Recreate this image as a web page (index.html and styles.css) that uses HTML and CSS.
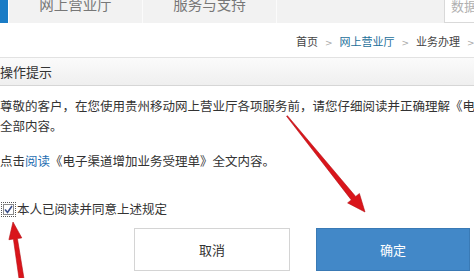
FILE: index.html
```html
<!DOCTYPE html>
<html lang="zh-CN">
<head>
<meta charset="utf-8">
<title>操作提示</title>
<link rel="stylesheet" href="styles.css">
</head>
<body>
<div class="page">
  <div class="nav">
    <div class="nav-accent"></div>
    <div class="nav-tab">网上营业厅</div>
    <div class="nav-tab">服务与支持</div>
    <div class="nav-fill"></div>
    <div class="search">数据</div>
  </div>
  <div class="crumbs">
    <span class="crumb">首页</span><span class="sep">&gt;</span><span class="crumb link">网上营业厅</span><span class="sep">&gt;</span><span class="crumb">业务办理</span><span class="sep">&gt;</span>
  </div>
  <div class="panel-head">操作提示</div>
  <div class="panel-body">
    <p class="intro">尊敬的客户，在您使用贵州移动网上营业厅各项服务前，请您仔细阅读并正确理解《电子渠道增加业务受理单》的<br>全部内容。</p>
    <p class="read">点击<span class="link">阅读</span>《电子渠道增加业务受理单》全文内容。</p>
    <div class="agree">
      <span class="check"><svg width="9" height="9" viewBox="0 0 9 9"><path d="M1 4.5 L3.5 7.5 L8 1" fill="none" stroke="#3a4f8a" stroke-width="1.6"/></svg></span>
      <span>本人已阅读并同意上述规定</span>
    </div>
    <div class="actions">
      <button class="btn btn-cancel">取消</button>
      <button class="btn btn-ok">确定</button>
    </div>
  </div>
  <svg class="arrows" width="474" height="278" viewBox="0 0 474 278">
    <polygon points="286.6,116.3 351.3,199.9 347.6,202.9 365,212 359.4,193.5 355.7,196.5 287.4,115.7" fill="#d9151b" stroke="#b50d12" stroke-width="0.6"/>
    <polygon points="13,222 8.9,239.7 13.4,239.1 20,285.4 25,284.6 17.4,238.5 21.8,237.9" fill="#d9151b" stroke="#b50d12" stroke-width="0.6"/>
  </svg>
</div>
</body>
</html>
```
FILE: styles.css
```css
html, body {
  margin: 0;
  padding: 0;
  background: #fff;
  overflow: hidden;
}
.page {
  position: relative;
  width: 474px;
  height: 278px;
  overflow: hidden;
  font-family: "Noto Sans CJK SC", "Noto Sans", sans-serif;
  font-size: 12.5px;
  color: #333;
}
.nav {
  display: flex;
  height: 23px;
}
.nav-accent {
  width: 8px;
  background: #1a7cc6;
  margin-right: 1px;
}
.nav-tab {
  width: 134px;
  background: #f2f2f2;
  border-right: 1px solid #fbfbfb;
  color: #777;
  font-size: 14.5px;
  line-height: 15px;
  display: flex;
  align-items: flex-end;
  justify-content: center;
  padding-bottom: 12px;
  box-sizing: border-box;
}
.nav-fill {
  flex: 1;
  background: #f2f2f2;
}
.search {
  width: 30px;
  background: #fff;
  border: 1px solid #d9d9d9;
  border-top: none;
  border-right: none;
  color: #b0b0b0;
  font-size: 13px;
  line-height: 14px;
  padding-left: 6px;
  display: flex;
  align-items: flex-end;
  padding-bottom: 9px;
  box-sizing: border-box;
  white-space: nowrap;
  overflow: hidden;
}
.crumbs {
  height: 34px;
  box-sizing: border-box;
  padding: 10px 0 0 296px;
  line-height: 16px;
  font-size: 11px;
  white-space: nowrap;
  color: #444;
}
.crumbs .link {
  color: #1d6f9a;
}
.sep {
  color: #aaa;
  margin: 0 7px;
  font-family: "DejaVu Sans", sans-serif;
  font-size: 9px;
}
.panel-head {
  border-top: 1px solid #e2e2e2;
  border-bottom: 1px solid #d6d6d6;
  height: 29px;
  box-sizing: border-box;
  background: linear-gradient(#fbfbfb, #efefef);
  line-height: 28px;
  font-size: 13px;
  color: #333;
}
.intro {
  margin: 10px 0 0 0;
  line-height: 20px;
  white-space: nowrap;
}
.read {
  margin: 15px 0 0 0;
  line-height: 20px;
  white-space: nowrap;
}
.link {
  color: #1f6fb2;
}
.agree {
  display: flex;
  align-items: center;
  margin-top: 28px;
  height: 20px;
  line-height: 20px;
  white-space: nowrap;
}
.check {
  width: 9px;
  height: 9px;
  border: 1px solid #8a8a8a;
  background: #fff;
  outline: 1px dotted #555;
  outline-offset: 1px;
  margin: 0 3px;
  display: flex;
  align-items: center;
  justify-content: center;
}
.actions {
  display: flex;
  gap: 26px;
  margin-top: 9px;
  margin-left: 134px;
}
.btn {
  height: 43px;
  font-family: "Noto Sans CJK SC", sans-serif;
  font-size: 13px;
  border-radius: 0;
  cursor: pointer;
}
.btn-cancel {
  width: 156px;
  background: #fff;
  border: 1px solid #d4d4d4;
  color: #333;
}
.btn-ok {
  width: 154px;
  background: #4288c8;
  border: 1px solid #3a7ab5;
  color: #fff;
}
.arrows {
  position: absolute;
  left: 0;
  top: 0;
  pointer-events: none;
}
```
